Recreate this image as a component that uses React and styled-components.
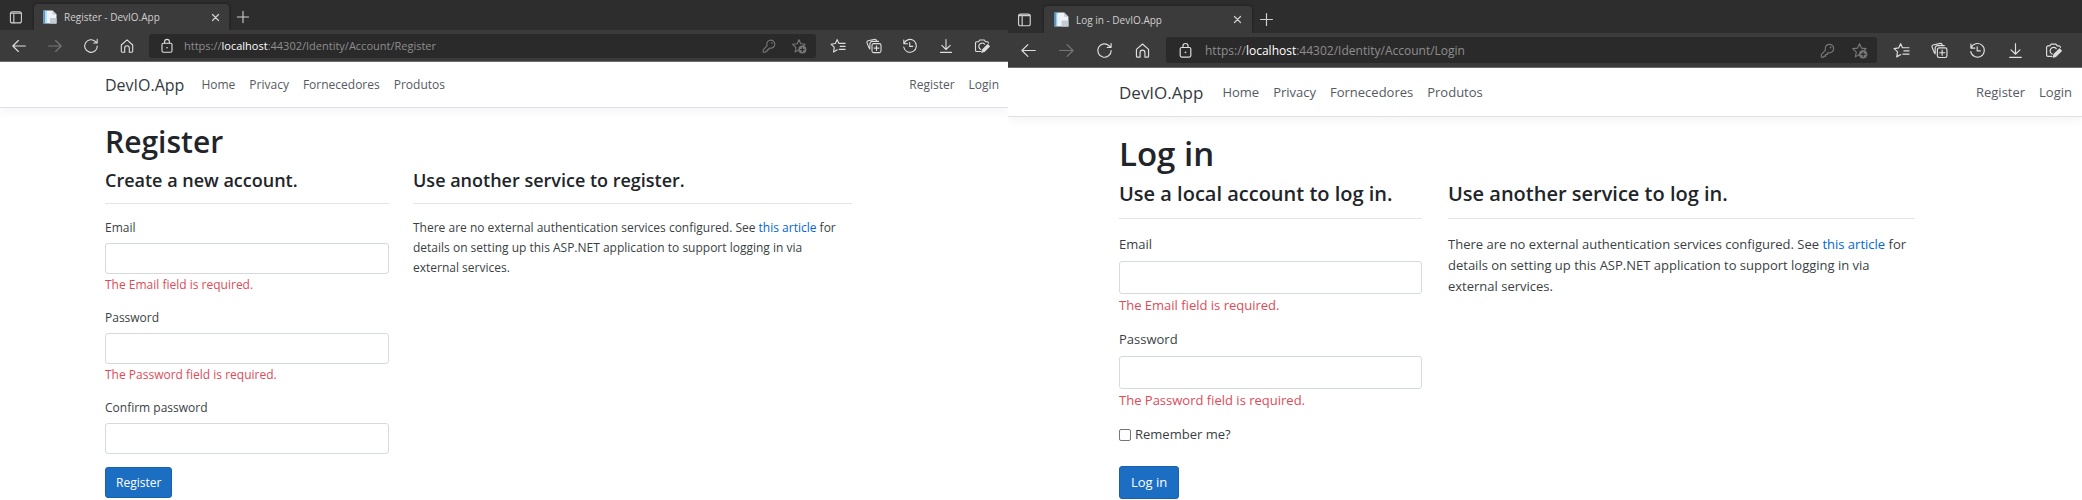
import React from "react";
import styled, { createGlobalStyle, css, ThemeProvider } from "styled-components";

const GlobalStyle = createGlobalStyle`
  *, *::before, *::after { box-sizing: border-box; }
  body { margin: 0; background: #fff; color: #212529; font-family: "Open Sans", "Noto Sans", sans-serif; }
  h1, h4, p { margin: 0; }
  button, input { font: inherit; margin: 0; }
`;

/* Two zoom levels of the same browser window. */
const compact = {
  tabText: 10, urlText: 11, text: 12, brand: 16, h1: 30, h4: 18,
  line: 20, h1Line: 40, h4Line: 24,
  strip: 30, tabHeight: 26, tabLeft: 34, tabWidth: 195, tabPad: 8,
  toolbar: 31, slot: 36, icon: 16, bar: 24, barGap: 4, endPad: 8,
  lockSlot: 35, barSlot: 30,
  header: 46, left: 105, right: 156, navGap: 14, brandGap: 17, navEnd: 9,
  top: 14, gap: 6, rule: 11, formTop: 14, labelGap: 5, group: 13, control: 31, columnGap: 24,
  columns: "284fr 439fr", btnPad: 10, check: 11,
};
const regular = {
  tabText: 10, urlText: 12, text: 13, brand: 17, h1: 33, h4: 20,
  line: 21, h1Line: 42, h4Line: 25,
  strip: 33, tabHeight: 27, tabLeft: 36, tabWidth: 208, tabPad: 9,
  toolbar: 34, slot: 38, icon: 17, bar: 26, barGap: 5, endPad: 10,
  lockSlot: 39, barSlot: 32,
  header: 49, left: 111, right: 167, navGap: 14, brandGap: 19, navEnd: 10,
  top: 16, gap: 6, rule: 12, formTop: 15, labelGap: 6, group: 13, control: 33, columnGap: 26,
  columns: "303fr 467fr", btnPad: 11, check: 12,
};

const px = (key) => ({ theme }) => `${theme[key]}px`;

const Desktop = styled.main`
  display: grid;
  grid-template-columns: minmax(0, 1008fr) minmax(0, 1074fr);
`;
const Window = styled.section`
  min-width: 0;
  background: #fff;
  overflow: hidden;
`;

/* Browser chrome */
const TabStrip = styled.div`
  display: flex;
  align-items: flex-end;
  height: ${px("strip")};
  background: #2d2d2d;
  color: #d0d0d0;
`;
const plainButton = css`
  display: flex;
  align-items: center;
  justify-content: center;
  padding: 0;
  border: 0;
  background: none;
  color: inherit;
`;
const TabActions = styled.button`
  ${plainButton}
  width: ${px("tabLeft")};
  height: ${px("tabHeight")};
  padding-right: 3px;
`;
const Tab = styled.div`
  display: flex;
  align-items: center;
  gap: 6px;
  width: ${px("tabWidth")};
  height: ${px("tabHeight")};
  padding: 0 ${px("tabPad")};
  border-radius: 4px 4px 0 0;
  background: #3b3b3b;
  box-shadow: 0 0 3px #1c1c1c;
  font-size: ${px("tabText")};
  white-space: nowrap;
  clip-path: inset(-4px -4px 0 -4px);
`;
const TabTitle = styled.span`
  flex: 1;
`;
const TabButton = styled.button`
  ${plainButton}
  width: ${({ $wide }) => ($wide ? 28 : 12)}px;
  height: ${({ $wide, theme }) => ($wide ? `${theme.tabHeight}px` : "12px")};
`;
const Toolbar = styled.div`
  display: flex;
  align-items: center;
  height: ${px("toolbar")};
  padding: 0 ${px("endPad")} 0 1px;
  background: #3b3b3b;
  color: #dedede;
  border-bottom: 1px solid #6e6e6e;
  box-sizing: content-box;
`;
const ToolButton = styled.button`
  ${plainButton}
  flex: none;
  width: ${({ theme, $inBar }) => ($inBar ? theme.barSlot : theme.slot)}px;
  height: ${px("bar")};
  color: ${({ $dim }) => ($dim ? "#777" : "inherit")};
`;
const AddressBar = styled.div`
  display: flex;
  align-items: center;
  flex: 1;
  min-width: 0;
  height: ${px("bar")};
  margin: 0 ${px("barGap")};
  padding-right: 2px;
  border-radius: 3px;
  background: #2a2a2a;
`;
const LockSlot = styled.span`
  display: flex;
  justify-content: center;
  flex: none;
  width: ${px("lockSlot")};
`;
const Url = styled.span`
  flex: 1;
  min-width: 0;
  overflow: hidden;
  color: #8e8e8e;
  font-size: ${px("urlText")};
  white-space: nowrap;
`;
const Host = styled.span`
  color: #fff;
`;

/* Web page */
const Header = styled.header`
  display: flex;
  align-items: center;
  height: ${px("header")};
  padding: 0 ${px("navEnd")} 0 ${px("left")};
  border-bottom: 1px solid #dee2e6;
  box-shadow: 0 3px 10px rgba(0, 0, 0, 0.05);
  font-size: ${px("text")};
`;
const Brand = styled.a`
  margin-right: ${px("brandGap")};
  color: #343a40;
  font-size: ${px("brand")};
  text-decoration: none;
`;
const Nav = styled.nav`
  display: flex;
  gap: ${px("navGap")};
  margin-left: ${({ $end }) => ($end ? "auto" : "0")};
`;
const NavLink = styled.a`
  color: #555a5f;
  text-decoration: none;
`;
const Content = styled.div`
  padding: ${px("top")} ${px("right")} 0 ${px("left")};
  font-size: ${px("text")};
  line-height: ${px("line")};
`;
const Title = styled.h1`
  width: fit-content;
  margin-bottom: ${px("gap")};
  font-size: ${px("h1")};
  font-weight: 600;
  line-height: ${px("h1Line")};
`;
const Columns = styled.div`
  display: grid;
  grid-template-columns: ${({ theme }) => theme.columns};
  column-gap: ${px("columnGap")};
  align-items: start;
`;
const Section = styled.section`
  min-width: 0;
`;
const Subtitle = styled.h4`
  padding-bottom: ${px("rule")};
  margin-bottom: ${px("formTop")};
  border-bottom: 1px solid #e5e5e5;
  font-size: ${px("h4")};
  font-weight: 600;
  line-height: ${px("h4Line")};
  white-space: nowrap;
`;
const Note = styled.p`
  padding-right: 6px;
  color: #3a3f44;
`;
const Link = styled.a`
  color: #0366d6;
  text-decoration: none;
`;
const Group = styled.div`
  display: flow-root;
  margin-bottom: ${px("group")};
`;
const Label = styled.label`
  display: block;
  margin-bottom: ${px("labelGap")};
  color: #3a3f44;
`;
const CheckLabel = styled(Label)`
  display: flex;
  align-items: center;
  gap: 4px;
  margin-bottom: 8px;
`;
const Checkbox = styled.input`
  appearance: none;
  width: ${px("check")};
  height: ${px("check")};
  border: 1px solid #767676;
  border-radius: 2px;
  background: #fff;
  &:checked { background: #1b6ec2; }
`;
const TextInput = styled.input`
  display: block;
  width: 100%;
  height: ${px("control")};
  padding: 0 10px;
  border: 1px solid #d5dae0;
  border-radius: 3px;
  background: #fff;
`;
const ErrorText = styled.span`
  display: block;
  padding-top: 1px;
  color: #e04b59;
`;
const Submit = styled.button`
  height: ${px("control")};
  padding: 0 ${px("btnPad")};
  border: 1px solid #1861ac;
  border-radius: 3px;
  background: #1b6ec2;
  color: #fff;
`;

/* Icons, drawn on a 16 unit grid */
const Glyph = styled.svg`
  display: block;
  width: ${px("icon")};
  height: ${px("icon")};
  fill: none;
  stroke: currentColor;
  stroke-width: 1.1;
  stroke-linecap: round;
  stroke-linejoin: round;
`;
const Icon = ({ children }) => (
  <Glyph viewBox="0 0 16 16" aria-hidden="true">{children}</Glyph>
);
const star = "M8 1.7 L9.8 5.7 14.2 6.2 11 9.1 M4.1 14 L5 9.6 1.6 6.3 6.2 5.7 8 1.7 M4.1 14 L7.4 12";
const icons = {
  actions: (
    <Icon>
      <rect x="2.4" y="2.9" width="11" height="11" rx="2" />
      <path d="M3 4.3h10M5.8 5.4v8.2" />
    </Icon>
  ),
  page: (
    <Icon>
      <path d="M1.5 1.5h9l4 4v9h-13z" fill="#eef3f8" stroke="none" />
      <path d="M1.5 1.5h3.2v13H1.5z" fill="#4d9bd3" stroke="none" />
      <path d="M3.2 2h1.5v12H3.2z" fill="#d6ecfa" stroke="none" />
      <path d="M10.5 1.5v4h4zM8 9h6.5v5.5H8z" fill="#c3ccd6" stroke="none" />
    </Icon>
  ),
  close: <Icon><path d="M3.6 3.6l8.8 8.8M12.4 3.6l-8.8 8.8" strokeWidth="1.7" /></Icon>,
  plus: <Icon><path d="M8 2.4v11.2M2.4 8h11.2" /></Icon>,
  back: <Icon><path d="M14.4 8H1.8M7.4 2.5L1.8 8l5.6 5.5" /></Icon>,
  forward: <Icon><path d="M1.6 8h12.6M8.6 2.5L14.2 8l-5.6 5.5" /></Icon>,
  reload: <Icon><path d="M14.3 8a6.3 6.3 0 1 1-2-4.6L14 5M14.2 1.4V5h-3.6" /></Icon>,
  home: <Icon><path d="M2.3 7L8 1.9 13.7 7v6.3a.9.9 0 0 1-.9.9h-2.5V10a2.3 2.3 0 0 0-4.6 0v4.2H3.2a.9.9 0 0 1-.9-.9z" /></Icon>,
  lock: (
    <Icon>
      <rect x="3" y="5.2" width="10" height="9" rx="1.4" />
      <path d="M5.6 5V3.8a2.4 2.4 0 0 1 4.8 0V5" />
      <circle cx="8" cy="9.7" r=".8" fill="currentColor" stroke="none" />
    </Icon>
  ),
  key: (
    <Icon>
      <path d="M6.1 7.7A4 4 0 1 1 9 10.1l-1.2.4v1.3H6.2v1.5H4.7l-.2.9H2.2v-2.4z" />
      <circle cx="10.9" cy="5.1" r=".8" fill="currentColor" stroke="none" />
    </Icon>
  ),
  starAdd: (
    <Icon>
      <path d={star} />
      <circle cx="11.4" cy="11.6" r="4" fill="currentColor" stroke="none" />
      <path d="M11.4 9.7v3.8M9.5 11.6h3.8" stroke="#2a2a2a" />
    </Icon>
  ),
  favourites: (
    <Icon>
      <path d="M8.8 5.2L7.2 1.6 5.4 5.5 1 6.2 4.3 9.3 3.5 14 7.3 11.8M9.3 5.4h5.8M10.3 8.4H15.1M9.3 11.4H15.1" />
    </Icon>
  ),
  collections: (
    <Icon>
      <rect x="6" y="5.6" width="9" height="9" rx="1.6" />
      <path d="M10.5 7.7v4.8M8.1 10.1h4.8" />
      <path d="M3.9 11C2.8 10.2 2.5 8.5 1 4.7A1.6 1.6 0 0 1 2 2.8L8.8 1.3Q10.2 1.2 10.8 3.2M3.9 11V5.7A2.3 2.3 0 0 1 6.2 3.4H12.5" />
    </Icon>
  ),
  history: <Icon><path d="M1.8 2v3.7h3.7M2 5.6A6.4 6.4 0 1 1 1.7 9M7.7 4.5V8.4h3" /></Icon>,
  download: <Icon><path d="M8 1.6v9.8M3.8 7.4L8 11.5l4.2-4.1M2.5 14.4h11" /></Icon>,
  capture: (
    <Icon>
      <path d="M6.5 13.5H2.8A1.3 1.3 0 0 1 1.5 12.2V5A1.3 1.3 0 0 1 2.8 3.7H4.5L5.7 2h4.6l1.2 1.7h1.7A1.3 1.3 0 0 1 14.5 5M10.6 6.2a3.3 3.3 0 1 0-3.8 5.2" />
      <path d="M13.7 6.6l1.7 1.7-5.2 5.2-2.5.8.8-2.5z" fill="currentColor" />
    </Icon>
  ),
};

const SmallGlyph = styled.span`
  display: flex;
  svg { width: 11px; height: 11px; }
`;

function Tool({ name, label, dim, inBar }) {
  return (
    <ToolButton type="button" aria-label={label} $dim={dim} $inBar={inBar}>
      {icons[name]}
    </ToolButton>
  );
}

function Browser({ theme, title, path, children }) {
  return (
    <ThemeProvider theme={theme}>
      <Window>
        <TabStrip>
          <TabActions type="button" aria-label="Tab actions">{icons.actions}</TabActions>
          <Tab>
            {icons.page}
            <TabTitle>{title}</TabTitle>
            <TabButton type="button" aria-label="Close tab">
              <SmallGlyph>{icons.close}</SmallGlyph>
            </TabButton>
          </Tab>
          <TabButton type="button" $wide aria-label="New tab">{icons.plus}</TabButton>
        </TabStrip>
        <Toolbar>
          <Tool name="back" label="Back" />
          <Tool name="forward" label="Forward" dim />
          <Tool name="reload" label="Reload" />
          <Tool name="home" label="Home" />
          <AddressBar>
            <LockSlot>{icons.lock}</LockSlot>
            <Url>https://<Host>localhost</Host>:44302{path}</Url>
            <Tool name="key" label="Saved passwords" dim inBar />
            <Tool name="starAdd" label="Add to favourites" dim inBar />
          </AddressBar>
          <Tool name="favourites" label="Favourites" />
          <Tool name="collections" label="Collections" />
          <Tool name="history" label="History" />
          <Tool name="download" label="Downloads" />
          <Tool name="capture" label="Web capture" />
        </Toolbar>
        <Header>
          <Brand href="#">DevIO.App</Brand>
          <Nav>
            {["Home", "Privacy", "Fornecedores", "Produtos"].map((item) => (
              <NavLink href="#" key={item}>{item}</NavLink>
            ))}
          </Nav>
          <Nav $end>
            <NavLink href="#">Register</NavLink>
            <NavLink href="#">Login</NavLink>
          </Nav>
        </Header>
        <Content>{children}</Content>
      </Window>
    </ThemeProvider>
  );
}

function Field({ id, label, type = "text", error }) {
  return (
    <Group>
      <Label htmlFor={id}>{label}</Label>
      <TextInput id={id} type={type} />
      {error && <ErrorText>{error}</ErrorText>}
    </Group>
  );
}

function ExternalServices({ heading }) {
  return (
    <Section>
      <Subtitle>{heading}</Subtitle>
      <Note>
        There are no external authentication services configured. See <Link href="#">this article</Link> for
        details on setting up this ASP.NET application to support logging in via external services.
      </Note>
    </Section>
  );
}

export default function App() {
  return (
    <>
      <GlobalStyle />
      <Desktop>
        <Browser theme={compact} title="Register - DevIO.App" path="/Identity/Account/Register">
          <Title>Register</Title>
          <Columns>
            <Section as="form">
              <Subtitle>Create a new account.</Subtitle>
              <Field id="register-email" label="Email" error="The Email field is required." />
              <Field id="register-password" type="password" label="Password" error="The Password field is required." />
              <Field id="register-confirm" type="password" label="Confirm password" />
              <Submit type="button">Register</Submit>
            </Section>
            <ExternalServices heading="Use another service to register." />
          </Columns>
        </Browser>
        <Browser theme={regular} title="Log in - DevIO.App" path="/Identity/Account/Login">
          <Title>Log in</Title>
          <Columns>
            <Section as="form">
              <Subtitle>Use a local account to log in.</Subtitle>
              <Field id="login-email" label="Email" error="The Email field is required." />
              <Field id="login-password" type="password" label="Password" error="The Password field is required." />
              <Group>
                <CheckLabel htmlFor="login-remember">
                  <Checkbox id="login-remember" type="checkbox" />
                  Remember me?
                </CheckLabel>
              </Group>
              <Submit type="button">Log in</Submit>
            </Section>
            <ExternalServices heading="Use another service to log in." />
          </Columns>
        </Browser>
      </Desktop>
    </>
  );
}
